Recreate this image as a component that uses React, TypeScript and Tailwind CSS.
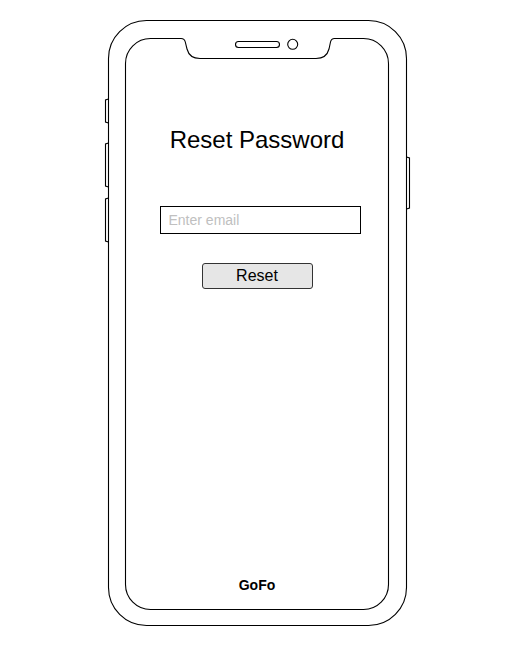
export default function App() {
  return (
    <div className="relative w-[528px] h-[658px] bg-white font-['Liberation_Sans',Arial,sans-serif]">
      {/* phone frame drawing */}
      <svg className="absolute inset-0" width="528" height="658" viewBox="0 0 528 658" fill="none" stroke="#000" strokeWidth="1.1">
        <rect x="108.5" y="20.5" width="298" height="605" rx="38" />
        <path d="M125.5,63.5 A25,25 0 0 1 150.5,38.5 L181,38.5 Q184.5,38.5 185.3,42 L187,49 Q189.5,58.5 200,58.5 L316,58.5 Q326.5,58.5 329,49 L330.5,42 Q331.3,38.5 334.5,38.5 L363.5,38.5 A25,25 0 0 1 388.5,63.5 L388.5,584.5 A25,25 0 0 1 363.5,609.5 L150.5,609.5 A25,25 0 0 1 125.5,584.5 Z" />
        <rect x="235.5" y="41.5" width="44" height="6" rx="3" />
        <circle cx="292.7" cy="44.3" r="5" />
        <path d="M108.5,99 L105.5,100 V122 L108.5,123" />
        <path d="M108.5,143 L105.5,144 V186 L108.5,187" />
        <path d="M108.5,198 L105.5,199 V241 L108.5,242" />
        <path d="M406.5,157 L409.5,158 V208 L406.5,209" />
      </svg>

      <div className="relative ml-[125px] pt-[38px] w-[264px] h-[610px] flex flex-col items-center">
        <h1 className="mt-[88px] text-[24px] leading-[28px] text-black">Reset Password</h1>
        <input
          type="text"
          placeholder="Enter email"
          className="mt-[52px] ml-[6px] w-[201px] h-[28px] border border-black px-[8px] text-[14px] text-black placeholder:text-[#c0c0c0] outline-none bg-white"
        />
        <button className="mt-[29px] w-[111px] h-[26px] rounded-[3px] border border-[#333] bg-[#e6e6e6] text-[16px] leading-none text-black">
          Reset
        </button>
        <div className="mt-auto mb-[14px] text-[14px] font-bold text-black">GoFo</div>
      </div>
    </div>
  )
}
